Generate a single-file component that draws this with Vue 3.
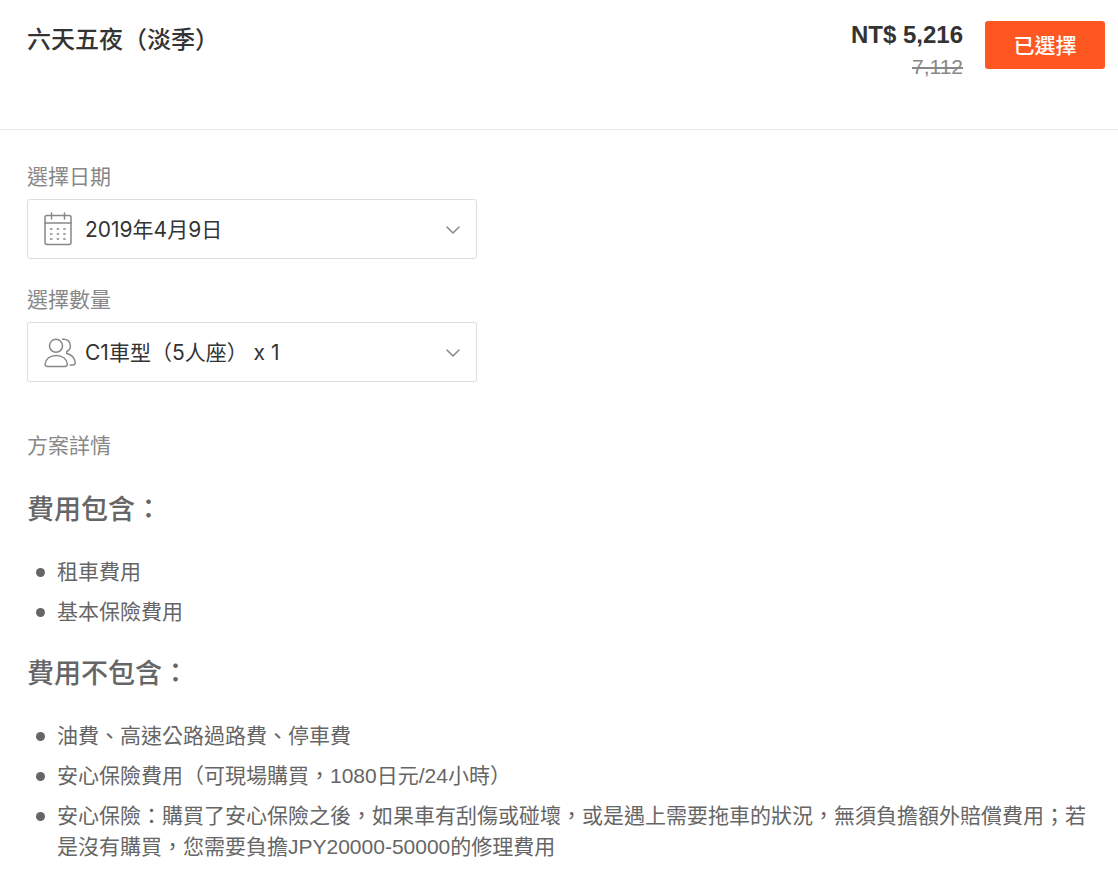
<template>
  <div class="package">
    <header class="package-header">
      <h1 class="title">{{ plan.name }}</h1>
      <div class="purchase">
        <div class="prices">
          <strong class="price">NT$ {{ plan.price }}</strong>
          <del class="old-price">{{ plan.oldPrice }}</del>
        </div>
        <button type="button" class="select-btn">已選擇</button>
      </div>
    </header>

    <main class="package-body">
      <div class="field">
        <label for="date">選擇日期</label>
        <div class="select-box">
          <svg class="icon" viewBox="0 0 32 34" aria-hidden="true">
            <rect x="1" y="3.5" width="26" height="29" rx="2" />
            <path d="M1 11h26M7.5 1v6M20.5 1v6" />
            <path
              class="dots"
              d="M6 17h2.500M12.700 17h2.500M19.200 17h2.500M6 22h2.500M12.700 22h2.500M19.200 22h2.500M6 27h2.500M12.700 27h2.500M19.200 27h2.500"
            />
          </svg>
          <select id="date" v-model="date">
            <option v-for="item in dates" :key="item" :value="item">{{ item }}</option>
          </select>
          <svg class="arrow" viewBox="0 0 14 8" aria-hidden="true">
            <path d="M1 1l6 6 6-6" />
          </svg>
        </div>
      </div>

      <div class="field">
        <label for="amount">選擇數量</label>
        <div class="select-box">
          <svg class="icon" viewBox="0 0 32 34" aria-hidden="true">
            <circle cx="12" cy="10.8" r="6.5" />
            <path d="M3.500 31.500h17.500c1.600 0 2.500-1 2.300-2.500C22.600 24 18.500 20.500 12.200 20.500S1.800 24 1.100 29c-.2 1.500.800 2.500 2.400 2.500z" />
            <path d="M18.500 4.300c4.300-.700 7.900 2.200 7.900 6.400 0 2.900-1.400 4.800-3.700 5.900v2c5 1.200 8 4.500 8.500 8.900.2 1.500-.7 2.500-2.200 2.500h-2.800" />
          </svg>
          <select id="amount" v-model="amount">
            <option v-for="item in amounts" :key="item" :value="item">{{ item }}</option>
          </select>
          <svg class="arrow" viewBox="0 0 14 8" aria-hidden="true">
            <path d="M1 1l6 6 6-6" />
          </svg>
        </div>
      </div>

      <section class="details">
        <h2>方案詳情</h2>
        <template v-for="group in details" :key="group.title">
          <h3>{{ group.title }}</h3>
          <ul>
            <li v-for="item in group.items" :key="item">{{ item }}</li>
          </ul>
        </template>
      </section>
    </main>
  </div>
</template>

<script setup>
import { ref } from 'vue'

const plan = {
  name: '六天五夜（淡季）',
  price: '5,216',
  oldPrice: '7,112',
}

const dates = ['2019年4月9日']
const amounts = ['C1車型（5人座） x 1']

const date = ref(dates[0])
const amount = ref(amounts[0])

const details = [
  {
    title: '費用包含：',
    items: ['租車費用', '基本保險費用'],
  },
  {
    title: '費用不包含：',
    items: [
      '油費、高速公路過路費、停車費',
      '安心保險費用（可現場購買，1080日元/24小時）',
      '安心保險：購買了安心保險之後，如果車有刮傷或碰壞，或是遇上需要拖車的狀況，無須負擔額外賠償費用；若是沒有購買，您需要負擔JPY20000-50000的修理費用',
    ],
  },
]
</script>

<style>
body {
  margin: 0;
  background: #ffffff;
}
</style>

<style scoped>
.package {
  font-family: "Liberation Sans", "Noto Sans CJK TC", sans-serif;
  font-size: 21px;
  color: #666666;
}

.package-header {
  display: flex;
  justify-content: space-between;
  align-items: flex-start;
  padding: 19px 13px 46px 27px;
  border-bottom: 1px solid #ebebeb;
}

.title {
  margin: 0;
  padding-top: 5px;
  font-size: 24px;
  font-weight: 500;
  line-height: 32px;
  color: #333333;
}

.purchase {
  display: flex;
  align-items: flex-start;
  gap: 22px;
}

.prices {
  display: flex;
  flex-direction: column;
  align-items: flex-end;
  line-height: 32px;
}

.price {
  font-size: 24px;
  color: #333333;
}

.old-price {
  color: #888888;
}

.select-btn {
  width: 120px;
  height: 48px;
  margin-top: 2px;
  padding: 0 0 2px;
  border: none;
  border-radius: 3px;
  background: #ff5722;
  color: #ffffff;
  font-family: inherit;
  font-size: 21px;
  font-weight: 500;
  cursor: pointer;
}

.package-body {
  padding: 32px 28px 10px 27px;
}

.field {
  max-width: 450px;
  margin-bottom: 26px;
}

.field label {
  display: block;
  margin-bottom: 7px;
  line-height: 30px;
  color: #888888;
}

.select-box {
  position: relative;
}

.select-box select {
  display: block;
  width: 100%;
  height: 60px;
  box-sizing: border-box;
  padding: 0 48px 0 57px;
  border: 1px solid #dddddd;
  border-radius: 3px;
  background: #ffffff;
  color: #333333;
  font-family: Inter, "Noto Sans CJK TC", sans-serif;
  font-size: 21px;
  appearance: none;
  cursor: pointer;
}

.icon,
.arrow {
  position: absolute;
  fill: none;
  stroke: #888888;
  stroke-width: 1.5;
  stroke-linecap: round;
  stroke-linejoin: round;
  pointer-events: none;
}

.icon {
  top: 13px;
  left: 17px;
  width: 32px;
  height: 34px;
}

.dots {
  stroke-linecap: butt;
}

.arrow {
  top: 27px;
  right: 17px;
  width: 14px;
  height: 8px;
}

.details {
  padding-top: 23px;
}

.details h2 {
  margin: 0 0 30px;
  font-size: 21px;
  font-weight: 400;
  line-height: 30px;
  color: #888888;
}

.details h3 {
  margin: 0 0 27px;
  font-size: 27px;
  font-weight: 500;
  line-height: 38px;
}

.details ul {
  margin: 0 0 28px;
  padding: 0;
  list-style: none;
}

.details li {
  position: relative;
  padding-left: 30px;
  line-height: 31px;
}

.details li::before {
  content: "";
  position: absolute;
  top: 12px;
  left: 9px;
  width: 9px;
  height: 9px;
  border-radius: 50%;
  background: #666666;
}

.details li + li {
  margin-top: 9px;
}

.details ul:last-child {
  margin-bottom: 0;
}
</style>
